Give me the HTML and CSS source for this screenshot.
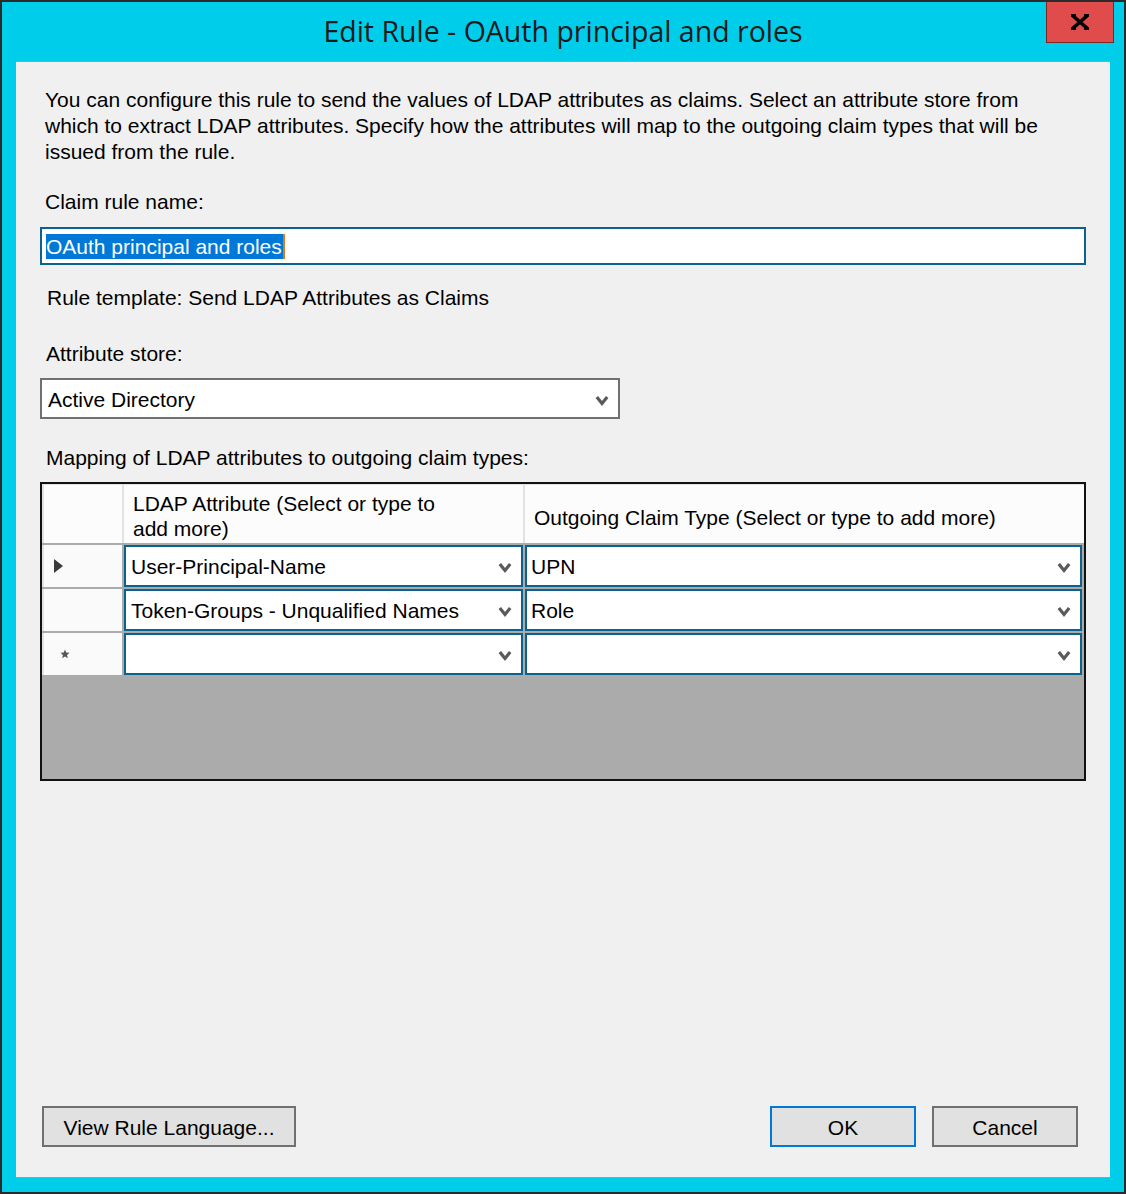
FILE: index.html
```html
<!DOCTYPE html>
<html>
<head>
<meta charset="utf-8">
<title>Edit Rule - OAuth principal and roles</title>
<link rel="stylesheet" href="styles.css">
</head>
<body>
<div class="window">
  <div class="titlebar">
    <div></div>
    <div class="title">Edit Rule - OAuth principal and roles</div>
    <div class="close">
      <svg width="20" height="16" viewBox="0 0 20 16"><path d="M2 1 L18 15 M18 1 L2 15" stroke="#000" stroke-width="3.6" fill="none"/><path d="M1 1h5M14 1h5M1 15h5M14 15h5" stroke="#000" stroke-width="2"/></svg>
    </div>
  </div>
  <div class="client">
    <p class="intro">You can configure this rule to send the values of LDAP attributes as claims. Select an attribute store from<br>which to extract LDAP attributes. Specify how the attributes will map to the outgoing claim types that will be<br>issued from the rule.</p>
    <div class="label l-name">Claim rule name:</div>
    <div class="textbox"><span class="sel">OAuth principal and roles</span><span class="caret"></span></div>
    <div class="label l-template">Rule template: Send LDAP Attributes as Claims</div>
    <div class="label l-store">Attribute store:</div>
    <div class="dropdown"><span>Active Directory</span>
      <svg class="chev" width="14" height="11" viewBox="0 0 14 11"><path d="M1.8 2 L7 8.4 L12.2 2" stroke="#5a5a5a" stroke-width="3.2" fill="none"/></svg>
    </div>
    <div class="label l-map">Mapping of LDAP attributes to outgoing claim types:</div>
    <div class="grid">
      <div class="row head">
        <div class="rh"></div>
        <div class="hc">LDAP Attribute (Select or type to<br>add more)</div>
        <div class="hc hc2">Outgoing Claim Type (Select or type to add more)</div>
      </div>
      <div class="row">
        <div class="rh"><svg width="10" height="14" viewBox="0 0 10 14"><path d="M0 0 L9 7 L0 14 Z" fill="#3a3a3a"/></svg></div>
        <div class="cb"><span>User-Principal-Name</span><svg class="chev" width="14" height="11" viewBox="0 0 14 11"><path d="M1.8 2 L7 8.4 L12.2 2" stroke="#5a5a5a" stroke-width="3.2" fill="none"/></svg></div>
        <div class="cb"><span>UPN</span><svg class="chev" width="14" height="11" viewBox="0 0 14 11"><path d="M1.8 2 L7 8.4 L12.2 2" stroke="#5a5a5a" stroke-width="3.2" fill="none"/></svg></div>
      </div>
      <div class="row">
        <div class="rh"></div>
        <div class="cb"><span>Token-Groups - Unqualified Names</span><svg class="chev" width="14" height="11" viewBox="0 0 14 11"><path d="M1.8 2 L7 8.4 L12.2 2" stroke="#5a5a5a" stroke-width="3.2" fill="none"/></svg></div>
        <div class="cb"><span>Role</span><svg class="chev" width="14" height="11" viewBox="0 0 14 11"><path d="M1.8 2 L7 8.4 L12.2 2" stroke="#5a5a5a" stroke-width="3.2" fill="none"/></svg></div>
      </div>
      <div class="row">
        <div class="rh"><svg class="star" width="10" height="10" viewBox="0 0 10 10"><path d="M5 0.5 L6.2 3.6 L9.5 3.8 L7 6 L7.8 9.3 L5 7.6 L2.2 9.3 L3 6 L0.5 3.8 L3.8 3.6 Z" fill="#555"/></svg></div>
        <div class="cb"><span></span><svg class="chev" width="14" height="11" viewBox="0 0 14 11"><path d="M1.8 2 L7 8.4 L12.2 2" stroke="#5a5a5a" stroke-width="3.2" fill="none"/></svg></div>
        <div class="cb"><span></span><svg class="chev" width="14" height="11" viewBox="0 0 14 11"><path d="M1.8 2 L7 8.4 L12.2 2" stroke="#5a5a5a" stroke-width="3.2" fill="none"/></svg></div>
      </div>
    </div>
    <div class="buttons">
      <button class="btn btn-wide">View Rule Language...</button>
      <div class="spacer"></div>
      <button class="btn btn-default">OK</button>
      <button class="btn">Cancel</button>
    </div>
  </div>
</div>
</body>
</html>
```

FILE: styles.css
```css
* { box-sizing: border-box; }
html, body { margin: 0; padding: 0; }
body {
  width: 1126px;
  height: 1194px;
  font-family: "Liberation Sans", Arial, sans-serif;
  font-size: 21px;
  color: #000;
  background: #2b2b2b;
}
.window {
  width: 1126px;
  height: 1194px;
  border: 2px solid #2b2b2b;
  background: #00cdea;
  display: flex;
  flex-direction: column;
}
.titlebar {
  height: 59px;
  display: grid;
  grid-template-columns: 1fr auto 1fr;
  align-items: start;
}
.title {
  font-family: "Open Sans", "Noto Sans", sans-serif;
  font-size: 28.5px;
  line-height: 59px;
  color: #1b1b1b;
  white-space: nowrap;
}
.close {
  justify-self: end;
  margin-right: 10px;
  width: 68px;
  height: 41px;
  background: #e04b4b;
  border: 1px solid #7a2a22;
  border-top: none;
  display: flex;
  align-items: center;
  justify-content: center;
}
.client {
  margin: 0 14px;
  height: 1117px;
  background: #f0f0f0;
  border-top: 1px solid #6aaec4;
  border-bottom: 1px solid #6aaec4;
  padding: 25px 24px 30px 24px;
  display: flex;
  flex-direction: column;
}
.intro {
  margin: 0;
  padding-left: 5px;
  line-height: 26px;
  white-space: nowrap;
}
.label { line-height: 26px; }
.l-name { margin-top: 24px; padding-left: 5px; }
.l-template { margin-top: 20px; padding-left: 7px; }
.l-store { margin-top: 30px; padding-left: 6px; }
.l-map { margin-top: 26px; padding-left: 6px; }
.textbox {
  margin-top: 12px;
  height: 38px;
  border: 2px solid #0b6291;
  background: #fff;
  padding: 4px 4px;
  display: flex;
  align-items: center;
}
.sel {
  background: #0078d7;
  color: #fff;
  line-height: 25px;
  padding-right: 1px;
}
.caret {
  width: 2px;
  height: 25px;
  background: #d97a1a;
}
.dropdown {
  margin-top: 11px;
  width: 580px;
  height: 41px;
  border: 2px solid #707070;
  background: #fff;
  padding: 3px 9px 0 6px;
  display: flex;
  align-items: center;
  justify-content: space-between;
}
.grid {
  margin-top: 11px;
  height: 299px;
  border: 2px solid #111;
  background: #ababab;
  display: flex;
  flex-direction: column;
  gap: 2px;
}
.row {
  display: grid;
  grid-template-columns: 80px 399px 559px;
  column-gap: 2px;
  height: 42px;
  flex: none;
}
.row.head {
  height: 59px;
  background: #e2e2e2;
  padding-top: 1px;
}
.rh {
  background: #fafafa;
  border-left: 2px solid #e2e2e2;
  display: flex;
  align-items: center;
  padding-left: 10px;
}
.head .rh { background: #fcfcfc; }
.hc {
  background: #fcfcfc;
  display: flex;
  align-items: center;
  padding: 4px 9px 0 9px;
  line-height: 25px;
}
.hc2 { padding-top: 6px; }
.star { margin-left: 6px; }
.cb {
  background: #fff;
  border: 2px solid #0b6291;
  display: flex;
  align-items: center;
  justify-content: space-between;
  padding: 2px 9px 0 5px;
}
.cb + .cb { padding-left: 4px; margin-right: 2px; }
.chev { flex: none; }
.buttons {
  margin-top: auto;
  display: flex;
  gap: 16px;
  padding: 0 8px 0 2px;
}
.spacer { flex: 1; }
.btn {
  font-family: "Liberation Sans", Arial, sans-serif;
  font-size: 21px;
  color: #000;
  height: 41px;
  width: 146px;
  border: 2px solid #707070;
  background: #e1e1e1;
  padding: 2px 0 0 0;
}
.btn-wide { width: 254px; }
.btn-default { border-color: #0078d7; }
```
